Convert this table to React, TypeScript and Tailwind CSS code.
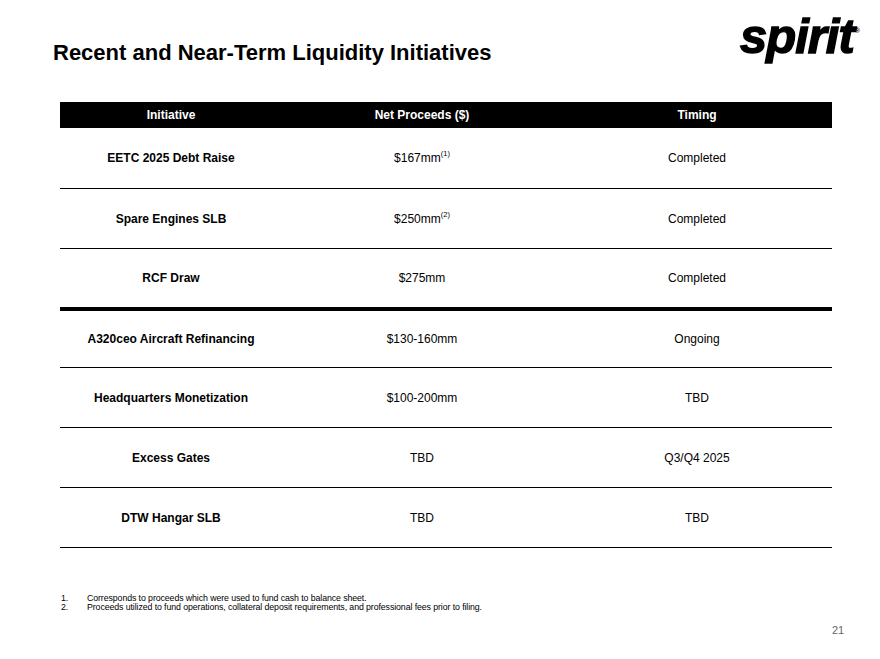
const rows = [
  { name: 'EETC 2025 Debt Raise', proceeds: '$167mm', note: '(1)', timing: 'Completed', h: 'h-[61px] border-b' },
  { name: 'Spare Engines SLB', proceeds: '$250mm', note: '(2)', timing: 'Completed', h: 'h-[60px] border-b' },
  { name: 'RCF Draw', proceeds: '$275mm', note: '', timing: 'Completed', h: 'h-[62px] border-b-4' },
  { name: 'A320ceo Aircraft Refinancing', proceeds: '$130-160mm', note: '', timing: 'Ongoing', h: 'h-[57px] border-b' },
  { name: 'Headquarters Monetization', proceeds: '$100-200mm', note: '', timing: 'TBD', h: 'h-[60px] border-b' },
  { name: 'Excess Gates', proceeds: 'TBD', note: '', timing: 'Q3/Q4 2025', h: 'h-[60px] border-b' },
  { name: 'DTW Hangar SLB', proceeds: 'TBD', note: '', timing: 'TBD', h: 'h-[60px] border-b' },
];

const App = () => {
  return (
    <div className="w-[880px] h-[659px] bg-white relative overflow-hidden font-['Liberation_Sans',Arial,sans-serif] text-black">
      {/* logo */}
      <div className="absolute left-[740px] top-[12px] flex items-start">
        <span className="text-[49px] leading-none font-black italic tracking-[-1px] [-webkit-text-stroke:1.4px_black]">spirit</span>
        <span className="text-[7px] font-bold mt-[14px] ml-[1px]">®</span>
      </div>

      <div className="pt-[40px] pl-[53px]">
        <h1 className="text-[22px] leading-[26px] font-bold">Recent and Near-Term Liquidity Initiatives</h1>
      </div>

      <div className="ml-[60px] mt-[36px] w-[772px]">
        <div className="grid grid-cols-[222px_280px_270px] bg-black text-white text-[12px] font-bold h-[26px] items-center text-center">
          <div>Initiative</div>
          <div>Net Proceeds ($)</div>
          <div>Timing</div>
        </div>
        {rows.map((r) => (
          <div
            key={r.name}
            className={`grid grid-cols-[222px_280px_270px] items-center text-center text-[12px] border-black ${r.h}`}
          >
            <div className="font-bold">{r.name}</div>
            <div>
              {r.proceeds}
              {r.note && <span className="text-[7.5px] align-top leading-none relative top-[1px]">{r.note}</span>}
            </div>
            <div>{r.timing}</div>
          </div>
        ))}
      </div>

      <div className="ml-[61px] mt-[46px] text-[8.8px] leading-[9px] tracking-[-0.1px]">
        <div className="flex"><span className="w-[26px]">1.</span><span>Corresponds to proceeds which were used to fund cash to balance sheet.</span></div>
        <div className="flex"><span className="w-[26px]">2.</span><span>Proceeds utilized to fund operations, collateral deposit requirements, and professional fees prior to filing.</span></div>
      </div>

      <div className="absolute left-[832px] top-[622px] text-[11px] text-[#666666]">21</div>
    </div>
  );
};

export default App;
